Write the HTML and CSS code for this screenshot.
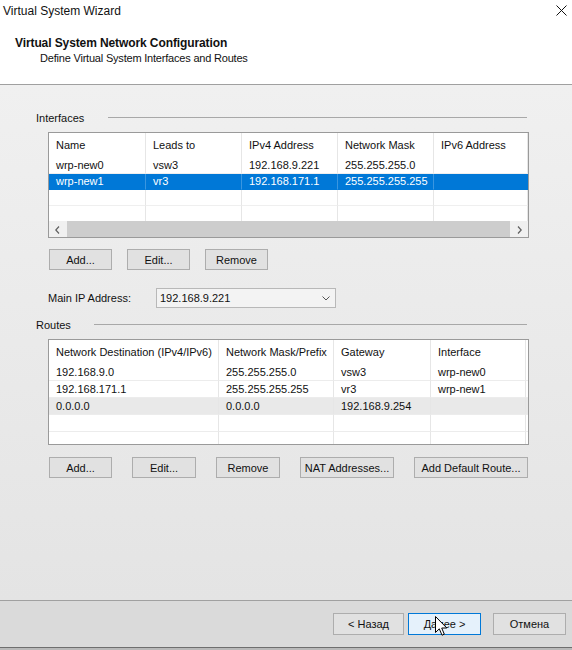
FILE: index.html
```html
<!DOCTYPE html>
<html>
<head>
<meta charset="utf-8">
<title>Virtual System Wizard</title>
<link rel="stylesheet" href="styles.css">
</head>
<body>
<div class="window">
  <div class="top">
    <div class="titlebar">
      <span class="wtitle">Virtual System Wizard</span>
      <svg class="close" width="11" height="11" viewBox="0 0 11 11"><path d="M0.5 0.5 L10.5 10.5 M10.5 0.5 L0.5 10.5" stroke="#111" stroke-width="1" fill="none"/></svg>
    </div>
    <div class="header">
      <div class="h-title">Virtual System Network Configuration</div>
      <div class="h-sub">Define Virtual System Interfaces and Routes</div>
    </div>
  </div>

  <div class="body">
    <div class="group-label first"><span>Interfaces</span><i class="rule"></i></div>
    <div class="listview">
      <div class="lv-row lv-head cols-if">
        <div class="cell">Name</div><div class="cell">Leads to</div><div class="cell">IPv4 Address</div><div class="cell">Network Mask</div><div class="cell">IPv6 Address</div>
      </div>
      <div class="lv-row row16 cols-if">
        <div class="cell">wrp-new0</div><div class="cell">vsw3</div><div class="cell">192.168.9.221</div><div class="cell">255.255.255.0</div><div class="cell"></div>
      </div>
      <div class="lv-row row16 cols-if selected">
        <div class="cell">wrp-new1</div><div class="cell">vr3</div><div class="cell">192.168.171.1</div><div class="cell">255.255.255.255</div><div class="cell"></div>
      </div>
      <div class="lv-row row16 cols-if">
        <div class="cell"></div><div class="cell"></div><div class="cell"></div><div class="cell"></div><div class="cell"></div>
      </div>
      <div class="lv-row row-rest15 cols-if">
        <div class="cell"></div><div class="cell"></div><div class="cell"></div><div class="cell"></div><div class="cell"></div>
      </div>
      <div class="hscroll">
        <div class="sb-arrow"><svg width="5" height="8" viewBox="0 0 5 8"><path d="M4 0.5 L0.8 4 L4 7.5" stroke="#606060" stroke-width="1.2" fill="none"/></svg></div>
        <div class="sb-thumb"></div>
        <div class="sb-arrow"><svg width="5" height="8" viewBox="0 0 5 8"><path d="M1 0.5 L4.2 4 L1 7.5" stroke="#606060" stroke-width="1.2" fill="none"/></svg></div>
      </div>
    </div>
    <div class="btn-row gap-if">
      <div class="btn w63">Add...</div>
      <div class="btn w63">Edit...</div>
      <div class="btn w63">Remove</div>
    </div>

    <div class="ip-row">
      <span class="ip-label">Main IP Address:</span>
      <div class="combo">
        <span>192.168.9.221</span>
        <svg width="8" height="5" viewBox="0 0 8 5"><path d="M0.5 0.5 L4 4 L7.5 0.5" stroke="#555" stroke-width="1" fill="none"/></svg>
      </div>
    </div>

    <div class="group-label routes"><span>Routes</span><i class="rule"></i></div>
    <div class="listview">
      <div class="lv-row lv-head cols-rt">
        <div class="cell">Network Destination (IPv4/IPv6)</div><div class="cell">Network Mask/Prefix</div><div class="cell">Gateway</div><div class="cell">Interface</div><div class="cell"></div>
      </div>
      <div class="lv-row row17 cols-rt">
        <div class="cell">192.168.9.0</div><div class="cell">255.255.255.0</div><div class="cell">vsw3</div><div class="cell">wrp-new0</div><div class="cell"></div>
      </div>
      <div class="lv-row row17 cols-rt">
        <div class="cell">192.168.171.1</div><div class="cell">255.255.255.255</div><div class="cell">vr3</div><div class="cell">wrp-new1</div><div class="cell"></div>
      </div>
      <div class="lv-row row17 cols-rt inactive">
        <div class="cell">0.0.0.0</div><div class="cell">0.0.0.0</div><div class="cell">192.168.9.254</div><div class="cell"></div><div class="cell"></div>
      </div>
      <div class="lv-row row17 cols-rt">
        <div class="cell"></div><div class="cell"></div><div class="cell"></div><div class="cell"></div><div class="cell"></div>
      </div>
      <div class="lv-row row-rest12 cols-rt">
        <div class="cell"></div><div class="cell"></div><div class="cell"></div><div class="cell"></div><div class="cell"></div>
      </div>
    </div>
    <div class="btn-row gap-rt">
      <div class="btn w63">Add...</div>
      <div class="btn w64">Edit...</div>
      <div class="btn w64">Remove</div>
      <div class="btn w94">NAT Addresses...</div>
      <div class="btn w114">Add Default Route...</div>
    </div>
  </div>

  <div class="footer">
    <div class="btn fbtn w71">&lt; Назад</div>
    <div class="btn fbtn w73 default">Далее &gt;</div>
    <div class="btn fbtn w73 cancel">Отмена</div>
  </div>
  <div class="below"></div>

  <svg class="cursor" width="13" height="21" viewBox="0 0 13 21"><path d="M0.5 0.5 L0.5 16.5 L4.3 12.8 L7 19.2 L9.3 18.2 L6.7 12 L11.8 12 Z" fill="#fff" stroke="#000" stroke-width="1" stroke-linejoin="miter"/></svg>
</div>
</body>
</html>
```

FILE: styles.css
```css
* { box-sizing: border-box; }
html, body { margin: 0; padding: 0; }
body {
  width: 572px;
  height: 650px;
  overflow: hidden;
  font-family: "Liberation Sans", Arial, sans-serif;
  font-size: 11px;
  color: #111;
}
.window {
  position: relative;
  width: 572px;
  height: 650px;
  display: flex;
  flex-direction: column;
}
.top {
  height: 85px;
  background: #fff;
  border-bottom: 1px solid #a0a0a0;
  flex: none;
}
.titlebar {
  height: 22px;
  display: flex;
  align-items: center;
  justify-content: space-between;
  padding: 0 5px 0 3px;
}
.wtitle { font-size: 12px; }
.close { margin-top: -1px; }
.header { padding: 14px 0 0 15px; }
.h-title { font-size: 12px; font-weight: bold; line-height: 14px; letter-spacing: -0.1px; }
.h-sub { line-height: 14px; padding-left: 25px; margin-top: 1px; letter-spacing: -0.2px; }

.body {
  flex: 1;
  background: linear-gradient(#f0f0f0, #e4e4e4);
  padding: 26px 43px 0 36px;
}
.group-label {
  display: flex;
  align-items: center;
  height: 14px;
  line-height: 14px;
}
.group-label .rule {
  flex: 1;
  height: 1px;
  background: #a8a8a8;
  margin-top: -1px;
  margin-right: 2px;
}
.group-label.first .rule { margin-left: 24px; }
.group-label.routes { margin-top: 10px; }
.group-label.routes .rule { margin-left: 23px; }

.listview {
  margin: 7px 0 0 12px;
  width: 481px;
  height: 106px;
  border: 1px solid #9a9a9a;
  background: #fff;
  overflow: hidden;
}
.lv-row { display: grid; }
.cols-if { grid-template-columns: 97px 96px 96px 96px 1fr; }
.cols-rt { grid-template-columns: 170px 115px 97px 95px 1fr; }
.cell {
  border-right: 1px solid #e6e6e6;
  padding-left: 7px;
  white-space: nowrap;
  overflow: hidden;
}
.lv-head { height: 25px; }
.lv-head .cell { line-height: 24px; }
.cols-rt.lv-head { height: 24px; }
.row16 { height: 16px; }
.row16 .cell { line-height: 15px; border-bottom: 1px solid #efefef; }
.row17 { height: 17px; }
.row17 .cell { line-height: 16px; border-bottom: 1px solid #ececec; }
.row-rest15 { height: 15px; }
.row-rest12 { height: 12px; }
.selected { background: #0078d7; color: #fff; }
.selected .cell { border-right-color: #0078d7; border-bottom-color: #0078d7; }
.selected .cell:nth-child(-n+4) { border-right-color: #3a96e0; }
.inactive { background: #e9e9e9; }

.hscroll {
  height: 17px;
  display: flex;
  background: #f0f0f0;
}
.sb-arrow {
  width: 17px;
  display: flex;
  align-items: center;
  justify-content: center;
}
.sb-thumb {
  flex: 1;
  background: #cdcdcd;
  margin: 0 1px;
}

.btn-row { display: flex; margin-left: 13px; }
.gap-if { margin-top: 11px; gap: 15px; }
.gap-rt { margin-top: 12px; gap: 20px; }
.btn {
  height: 21px;
  background: #e1e1e1;
  border: 1px solid #adadad;
  display: flex;
  align-items: center;
  justify-content: center;
  white-space: nowrap;
}
.w63 { width: 63px; }
.w64 { width: 64px; }
.w71 { width: 71px; }
.w73 { width: 73px; }
.w94 { width: 94px; }
.w114 { width: 114px; }

.ip-row {
  display: flex;
  align-items: center;
  margin: 18px 0 0 12px;
  height: 20px;
}
.ip-label { width: 108px; }
.combo {
  width: 180px;
  height: 20px;
  border: 1px solid #b8b8b8;
  background: #f3f3f3;
  display: flex;
  align-items: center;
  justify-content: space-between;
  padding: 0 5px 0 3px;
}

.footer {
  flex: none;
  height: 48px;
  border-top: 1px solid #a0a0a0;
  border-bottom: 1px solid #6e6e6e;
  background: #dadada;
  display: flex;
  align-items: center;
  justify-content: flex-end;
  padding: 0 6px 0 0;
  gap: 4px;
}
.fbtn { height: 22px; font-size: 11px; }
.default { border-color: #0078d7; background: #e5f1fb; }
.cancel { margin-left: 8px; }
.below { flex: none; height: 2px; background: #b9b9b9; }

.cursor {
  position: absolute;
  left: 435px;
  top: 616px;
}
```
